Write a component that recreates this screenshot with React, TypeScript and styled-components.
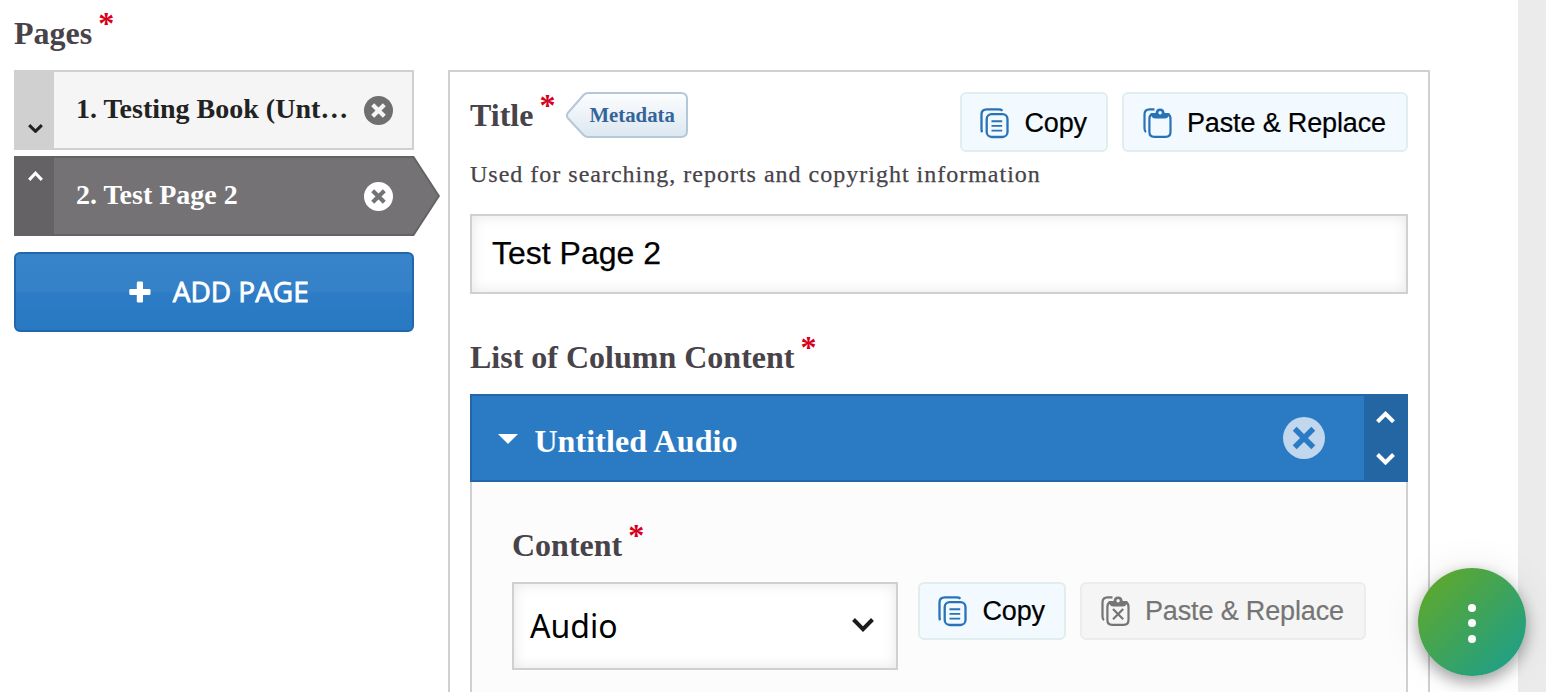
import React from 'react';
import styled, { createGlobalStyle, css } from 'styled-components';

const serif = '"Liberation Serif", "Times New Roman", serif';
const sans = '"Liberation Sans", Arial, sans-serif';

const GlobalStyle = createGlobalStyle`
  *, *::before, *::after { box-sizing: border-box; }
  html, body { margin: 0; padding: 0; background: #fff; }
  body { font-family: ${serif}; overflow: hidden; }
  button { margin: 0; }
  svg { display: block; flex: none; }
`;

const Page = styled.div`
  display: flex;
  align-items: stretch;
  width: 1546px;
  height: 692px;
  overflow: hidden;
`;

const Editor = styled.main`
  display: flex;
  flex: 1;
  align-items: flex-start;
  padding-left: 14px;
`;

const Gutter = styled.div`
  width: 28px;
  background: #ebebeb;
`;

const Sidebar = styled.aside`
  width: 400px;
  padding-top: 15px;
`;

const Label = styled.div`
  display: flex;
  height: 36px;
  font: bold 32px/36px ${serif};
  color: #474349;
  white-space: pre;
`;

const Star = styled.span`
  margin: -10px 0 0 6px;
  color: #d6001c;
`;

const PageList = styled.div`
  display: flex;
  flex-direction: column;
  gap: 6px;
  margin-top: 19px;
`;

const PageItem = styled.div<{ $active?: boolean }>`
  position: relative;
  display: flex;
  height: 80px;
  border: 2px solid ${p => (p.$active ? '#656266' : '#d0d0d0')};
  border-left: 0;
  background: ${p => (p.$active ? '#757276' : '#f5f5f5')};
  color: ${p => (p.$active ? '#fff' : '#222')};
`;

const OrderRail = styled.div<{ $active?: boolean }>`
  display: flex;
  justify-content: center;
  align-items: ${p => (p.$active ? 'flex-start' : 'flex-end')};
  width: 40px;
  padding: ${p => (p.$active ? '13px 0 0 2px' : '0 0 15px 2px')};
  background: ${p => (p.$active ? '#656266' : '#d0d0d0')};
`;

const PageName = styled.div`
  flex: 1;
  padding: 21px 0 0 22px;
  font: bold 28px/32px ${serif};
  white-space: nowrap;
`;

const PageRemove = styled.div`
  padding: 24px 19px 0 0;
`;

const ActiveArrow = styled.svg`
  position: absolute;
  left: 398px;
  top: -2px;
`;

const AddPage = styled.button`
  display: flex;
  align-items: center;
  justify-content: center;
  gap: 21.5px;
  width: 400px;
  height: 80px;
  margin-top: 16px;
  padding: 0 0 0 10px;
  border: 2px solid #2267a9;
  border-radius: 6px;
  background: linear-gradient(#3884ca 0, #3481c7 50%, #2d7cc5 50%, #2878c2 100%);
  color: #fff;
  font: 28px/40px "Open Sans", sans-serif;
  -webkit-text-stroke: 0.8px #fff;
`;

const AddPageText = styled.span`
  margin-top: -2px;
`;

const Panel = styled.section`
  width: 982px;
  height: 640px;
  margin: 70px 0 0 34px;
  padding: 20px 20px 0;
  border: 2px solid #d0d0d0;
`;

const TitleRow = styled.div`
  display: flex;
  height: 60px;
  ${Label} { margin-top: 5px; }
`;

const MetadataTag = styled.div`
  position: relative;
  width: 122px;
  height: 46px;
  margin-left: 11px;
  padding-left: 23px;
  font: bold 20.8px/45px ${serif};
  color: #34659a;
  span { position: relative; }
  svg { position: absolute; left: 0; top: 0; }
`;

const Actions = styled.div`
  display: flex;
  gap: 14px;
  margin-left: auto;
`;

const ActionButton = styled.button<{ $compact?: boolean; $off?: boolean; $wide?: boolean }>`
  display: flex;
  align-items: center;
  width: ${p => (p.$wide ? 286 : 148)}px;
  height: ${p => (p.$compact ? 58 : 60)}px;
  padding: ${p => (p.$compact ? 0 : 2)}px 0 0 ${p => (p.$wide ? 18.5 : 18)}px;
  gap: 14.5px;
  border: 2px solid #e0eeee;
  border-radius: 6px;
  background: #f2f9ff;
  color: #000;
  font: 27px/32px ${sans};
  letter-spacing: -0.15px;
  white-space: nowrap;
  -webkit-text-stroke: 0.2px currentColor;
  svg { color: #2873b8; }
  ${p =>
    p.$off &&
    css`
      border-color: #ececec;
      background: #f5f5f5;
      color: #757575;
      svg { color: #757575; }
    `}
`;

const Hint = styled.p`
  height: 28px;
  margin: 8px 0 0;
  font: 24px/28px ${serif};
  letter-spacing: 1px;
  color: #474349;
  -webkit-text-stroke: 0.25px #474349;
`;

const fieldFrame = css`
  border: 2px solid #d0d0d0;
  background: #fff;
  box-shadow: inset 0 0 14px rgba(0, 0, 0, 0.1);
  color: #000;
`;

const TextField = styled.input`
  ${fieldFrame}
  display: block;
  width: 938px;
  height: 80px;
  margin: 26px 0 45px;
  padding: 0 20px 2px;
  border-radius: 0;
  font: 32px/40px ${sans};
  -webkit-text-stroke: 0.25px #000;
`;

const ColumnHeader = styled.div`
  display: flex;
  height: 88px;
  margin-top: 19px;
  border: 2px solid #2466a6;
  border-right: 0;
  background: #2b7bc4;
`;

const ColumnTitle = styled.div`
  display: flex;
  flex: 1;
  padding: 27px 0 0 26px;
  gap: 16.4px;
  font: bold 32px/36px ${serif};
  letter-spacing: 0.1px;
  color: #fff;
  svg { margin-top: 10.7px; }
`;

const ColumnRemove = styled.div`
  padding: 21.4px 39px 0 0;
`;

const ColumnOrder = styled.div`
  display: flex;
  flex-direction: column;
  align-items: center;
  gap: 29.7px;
  width: 44px;
  padding: 15px 2px 0 0;
  background: #2466a3;
  color: #fff;
`;

const ColumnBody = styled.div`
  height: 240px;
  padding: 45px 40px 0;
  border: solid #d0d0d0;
  border-width: 0 2px;
  background: #fcfcfc;
`;

const ContentRow = styled.div`
  display: flex;
  margin-top: 19px;
`;

const Select = styled.div`
  ${fieldFrame}
  display: flex;
  align-items: center;
  justify-content: space-between;
  width: 386px;
  height: 88px;
  padding: 0 22px 0 16px;
  font: 32px/40px "Noto Sans", sans-serif;
  svg { margin-top: -2px; color: #1c1c1c; }
`;

const Fab = styled.button`
  position: fixed;
  left: 1418px;
  top: 568px;
  display: flex;
  flex-direction: column;
  align-items: center;
  justify-content: center;
  gap: 7.5px;
  width: 108px;
  height: 108px;
  padding: 2px 0 0;
  border: 0;
  border-radius: 50%;
  background: linear-gradient(135deg, #5fa82a 8%, #1e9f8a 92%);
  box-shadow: 0 6px 16px rgba(0, 0, 0, 0.36), 0 0 40px rgba(0, 0, 0, 0.08);
`;

const Dot = styled.i`
  width: 8px;
  height: 8px;
  border-radius: 50%;
  background: #fff;
`;

const Required = () => <Star>*</Star>;

type ChevronProps = { up?: boolean; w: number; h: number; stroke: number };

const Chevron = ({ up, w, h, stroke }: ChevronProps) => {
  const e = stroke * 0.38;
  const far = h - stroke * 0.71;
  return (
    <svg width={w} height={h} fill="none" stroke="currentColor" strokeWidth={stroke}>
      <path d={up ? `M${e} ${h - e}L${w / 2} ${h - far}L${w - e} ${h - e}` : `M${e} ${e}L${w / 2} ${far}L${w - e} ${e}`} />
    </svg>
  );
};

type CrossProps = { size: number; disc: string; cross: string; arm: number; stroke: number };

const CircleCross = ({ size, disc, cross, arm, stroke }: CrossProps) => (
  <svg width={size} height={size} viewBox={`${-size / 2} ${-size / 2} ${size} ${size}`}>
    <circle r={size / 2} fill={disc} />
    <path d={`M${-arm} ${-arm}L${arm} ${arm}M${arm} ${-arm}L${-arm} ${arm}`} stroke={cross} strokeWidth={stroke} />
  </svg>
);

const CopyIcon = () => (
  <svg width="30" height="32" fill="none" stroke="currentColor" strokeWidth="2.3">
    <path d="M2 25.2Q1.5 24 1.5 21V7.5Q1.5 2.4 7 2.4H18.5Q21 2.4 22.5 3.6" />
    <rect x="6.7" y="7.2" width="20.8" height="22.8" rx="5" />
    <path d="M11.5 14.2H22.2M11.5 18.9H22.2M11.5 23.6H22.2" strokeWidth="1.9" />
  </svg>
);

const PasteIcon = ({ blocked }: { blocked?: boolean }) => (
  <svg width="30" height="32" fill="none" stroke="currentColor" strokeWidth="2.2">
    <path d="M3 25.2Q1.5 24.2 1.5 21.2V7.5Q1.5 2.4 6.7 2.4H11.5" />
    <path d="M9 7.4Q6.4 8.2 6.4 12V25Q6.4 29.8 11.2 29.8H22.7Q27.5 29.8 27.5 25V12Q27.5 8.2 25 7.4" />
    <path
      d="M7.6 6H12.5Q13.1 1.6 17.1 1.6Q21.1 1.6 21.7 6H26.4Q25.8 11.6 21.5 11.6H12.7Q8.2 11.6 7.6 6ZM17.1 4A1.7 1.7 0 1 0 17.1 7.4A1.7 1.7 0 1 0 17.1 4Z"
      fill="currentColor"
      fillRule="evenodd"
      stroke="none"
    />
    {blocked && <path d="M12 14L22.2 24.2M22.2 14L12 24.2" />}
  </svg>
);

export default function App() {
  return (
    <Page>
      <GlobalStyle />
      <Editor>
        <Sidebar>
          <Label>Pages<Required /></Label>
          <PageList>
            <PageItem>
              <OrderRail><Chevron w={15} h={9.5} stroke={3.1} /></OrderRail>
              <PageName>1. Testing Book (Unt…</PageName>
              <PageRemove>
                <CircleCross size={29} disc="#6f6f70" cross="#f5f5f5" arm={5.8} stroke={4.2} />
              </PageRemove>
            </PageItem>
            <PageItem $active>
              <OrderRail $active><Chevron up w={15} h={10} stroke={3.1} /></OrderRail>
              <PageName>2. Test Page 2</PageName>
              <PageRemove>
                <CircleCross size={29} disc="#fff" cross="#757276" arm={5.8} stroke={4.2} />
              </PageRemove>
              <ActiveArrow width="28" height="80">
                <path d="M0 0H2L28 40L2 80H0Z" fill="#656266" />
                <path d="M0 2H1L25.8 40L1 78H0Z" fill="#757276" />
              </ActiveArrow>
            </PageItem>
          </PageList>
          <AddPage>
            <svg width="22" height="22" fill="#fff">
              <rect x="0.3" y="7.9" width="21.2" height="6.2" rx="1.3" />
              <rect x="7.8" y="0.6" width="6.2" height="21" rx="1.3" />
            </svg>
            <AddPageText>ADD PAGE</AddPageText>
          </AddPage>
        </Sidebar>

        <Panel>
          <TitleRow>
            <Label>Title<Required /></Label>
            <MetadataTag>
              <svg width="122" height="46">
                <defs>
                  <linearGradient id="tagFill" x1="0" y1="0" x2="0" y2="1">
                    <stop offset="0" stopColor="#fdfeff" />
                    <stop offset="1" stopColor="#dce7f0" />
                  </linearGradient>
                </defs>
                <path
                  d="M22 1H115Q121 1 121 7V39Q121 45 115 45H22Q19.5 45 17.5 43L2.2 26.5Q-0.4 23.5 2.2 20.5L17.5 3Q19.5 1 22 1Z"
                  fill="url(#tagFill)"
                  stroke="#b4c8da"
                  strokeWidth="2"
                />
              </svg>
              <span>Metadata</span>
            </MetadataTag>
            <Actions>
              <ActionButton><CopyIcon />Copy</ActionButton>
              <ActionButton $wide><PasteIcon />Paste &amp; Replace</ActionButton>
            </Actions>
          </TitleRow>
          <Hint>Used for searching, reports and copyright information</Hint>
          <TextField defaultValue="Test Page 2" />

          <Label>List of Column Content<Required /></Label>
          <ColumnHeader>
            <ColumnTitle>
              <svg width="20" height="10"><path d="M0 0H20L10 10Z" fill="#fff" /></svg>
              Untitled Audio
            </ColumnTitle>
            <ColumnRemove>
              <CircleCross size={42} disc="#c0d7ed" cross="#2b7bc4" arm={9.3} stroke={5.5} />
            </ColumnRemove>
            <ColumnOrder>
              <Chevron up w={19} h={12.3} stroke={4} />
              <Chevron w={19} h={12.3} stroke={4} />
            </ColumnOrder>
          </ColumnHeader>
          <ColumnBody>
            <Label>Content<Required /></Label>
            <ContentRow>
              <Select>
                Audio
                <Chevron w={22} h={14} stroke={4} />
              </Select>
              <Actions>
                <ActionButton $compact><CopyIcon />Copy</ActionButton>
                <ActionButton $compact $off $wide><PasteIcon blocked />Paste &amp; Replace</ActionButton>
              </Actions>
            </ContentRow>
          </ColumnBody>
        </Panel>
      </Editor>
      <Gutter />
      <Fab><Dot /><Dot /><Dot /></Fab>
    </Page>
  );
}
